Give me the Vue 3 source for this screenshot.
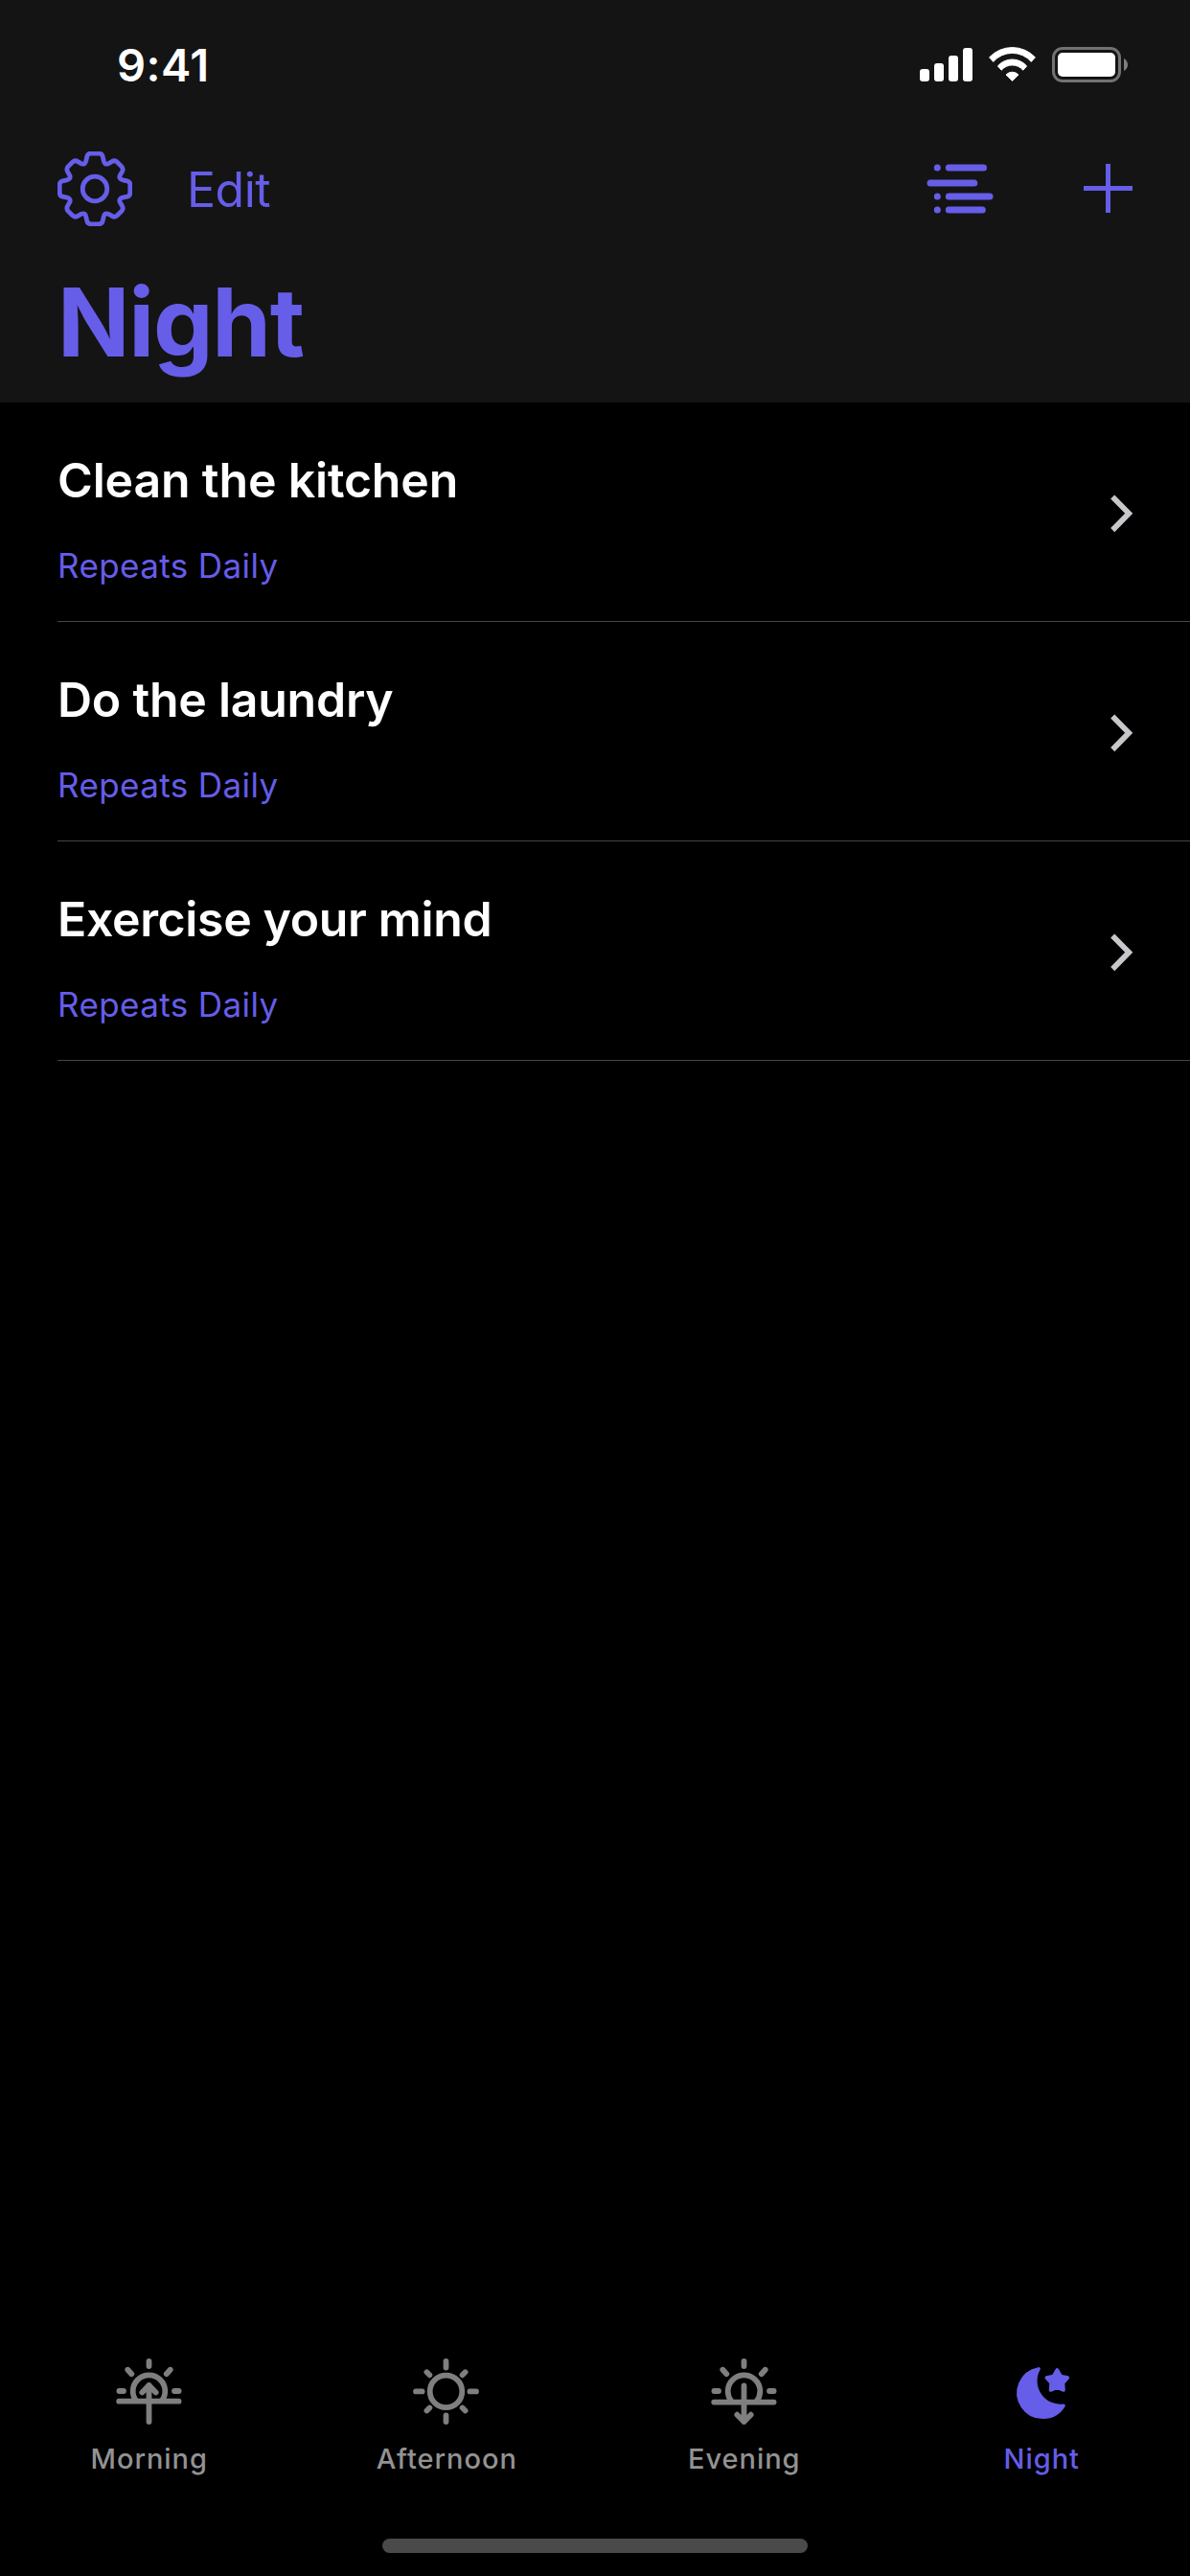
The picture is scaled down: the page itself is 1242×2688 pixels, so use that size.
<script setup>
const bars = [
  { x: 0, h: 13 },
  { x: 15, h: 19 },
  { x: 30, h: 27 },
  { x: 45, h: 35 },
]

const tasks = [
  { id: 'kitchen', title: 'Clean the kitchen', repeat: 'Repeats Daily' },
  { id: 'laundry', title: 'Do the laundry', repeat: 'Repeats Daily' },
  { id: 'mind', title: 'Exercise your mind', repeat: 'Repeats Daily' },
]

const tabs = [
  { id: 'morning', label: 'Morning' },
  { id: 'afternoon', label: 'Afternoon' },
  { id: 'evening', label: 'Evening' },
  { id: 'night', label: 'Night' },
]
const active = 'night'

// One quarter of the cog outline, rotated four times around its centre
const gearQuarter =
  'M39 2.2H43Q46.4 2.2 47.2 5.3L48.2 9.8Q49.2 14.4 53 12.8L56.8 10.6Q59.8 8.8 62.4 11.2L66.8 15.6Q69.2 18.2 67.4 21.2L65.2 25Q63.6 28.8 68.2 29.8L72.7 30.8Q75.8 31.6 75.8 35V39'
</script>

<template>
  <div class="screen">
    <header class="header">
      <div class="status">
        <span class="time">9:41</span>
        <div class="indicators">
          <svg class="signal" width="55" height="37" viewBox="0 0 55 37">
            <rect v-for="b in bars" :key="b.x" :x="b.x" :y="36 - b.h" width="10" :height="b.h" rx="3" fill="#fff" />
          </svg>
          <svg class="wifi" width="49" height="37" viewBox="0 0 49 37">
            <g fill="#fff" stroke="#fff" stroke-width="1" stroke-linejoin="round">
              <path d="M0.6 10.8A33 33 0 0 1 48.4 10.8L44.3 15.4A26.3 26.3 0 0 0 4.7 15.4Z" />
              <path d="M9.4 19.9A20 20 0 0 1 39.6 19.9L35.8 24.2A14.8 14.8 0 0 0 13.2 24.2Z" />
              <path d="M18 29A9 9 0 0 1 31 29L24.5 35.4Z" />
            </g>
          </svg>
          <svg class="battery" width="79" height="37" viewBox="0 0 79 37">
            <rect x="1.5" y="1.5" width="69" height="34" rx="9.5" fill="none" stroke="#727272" stroke-width="3" />
            <rect x="6" y="6" width="60" height="25" rx="5" fill="#fff" />
            <path d="M75 12Q79 14.5 79 18.5T75 25Z" fill="#7f7f7f" />
          </svg>
        </div>
      </div>

      <nav class="toolbar">
        <svg class="gear" width="78" height="78" viewBox="0 0 78 78" fill="none" stroke="currentColor" stroke-width="4.8">
          <path v-for="n in 4" :key="n" :d="gearQuarter" :transform="`rotate(${n * 90} 39 39)`" />
          <circle cx="39" cy="39" r="12.8" />
        </svg>
        <span class="edit">Edit</span>
        <svg class="agenda" width="70" height="54" viewBox="0 0 70 54" stroke="currentColor" stroke-width="7" stroke-linecap="round">
          <path d="M11.3 5h.01M11.3 35h.01M11.3 49h.01M23.3 5H59.5M4 21H49.8M23.3 35H66M23.3 49H58.3" />
        </svg>
        <svg class="plus" width="51" height="52" viewBox="0 0 51 52" stroke="currentColor" stroke-width="5">
          <path d="M25.5 0V51M0 25.5H51" />
        </svg>
      </nav>

      <h1 class="title">Night</h1>
    </header>

    <main class="list">
      <article v-for="t in tasks" :key="t.id" class="row">
        <div class="texts">
          <h2 class="name" :class="t.id">{{ t.title }}</h2>
          <p class="repeat">{{ t.repeat }}</p>
        </div>
        <svg class="chevron" width="24" height="40" viewBox="0 0 24 40" fill="none" stroke="#c7c7cc" stroke-width="5.8">
          <path d="M2.2 2.5L19.2 19.8L2.2 37.1" />
        </svg>
      </article>
    </main>

    <footer class="footer">
      <div class="tabs">
        <div v-for="t in tabs" :key="t.id" class="tab" :class="{ active: t.id === active }">
          <svg width="69" height="69" viewBox="0 0 69 69" fill="none" stroke="currentColor" stroke-width="5.8" stroke-linecap="round" stroke-linejoin="round">
            <template v-if="t.id === 'morning' || t.id === 'evening'">
              <path d="M34.5 3V8M3.4 34H8M61 34H65.6M12.3 11.7L16.3 16.2M56.7 11.7L52.7 16.2" />
              <path d="M21.3 44.5A16.8 16.8 0 1 1 47.7 44.5" stroke-linecap="butt" />
            </template>
            <path v-if="t.id === 'morning'" d="M3.2 44.7H65.6M34.5 28V66M27.3 35.5L34.5 28L41.7 35.5" />
            <path v-if="t.id === 'evening'" d="M3.2 45.6H65.6M34.5 28.5V66M27.3 58.7L34.5 66L41.7 58.7" />
            <template v-if="t.id === 'afternoon'">
              <circle cx="34.5" cy="34.4" r="16.8" />
              <path d="M34.5 3V9.6M34.5 59.4V66M3 34.4H9.6M59.4 34.4H66M14.4 14.3L17.4 17.3M54.6 14.3L51.6 17.3M14.4 54.5L17.4 51.5M54.6 54.5L51.6 51.5" />
            </template>
            <g v-if="t.id === 'night'" fill="currentColor" stroke-width="3.6">
              <path d="M32 10.9A25.4 25.4 0 1 0 58 49.3A26 26 0 0 1 32 10.9Z" />
              <path d="M51.3 12L55.1 18.4L62.3 20L57.5 25.6L58 33L51.3 30.1L44.6 33L45.1 25.6L40.3 20L47.5 18.4Z" />
            </g>
          </svg>
          <span class="label">{{ t.label }}</span>
        </div>
      </div>
      <div class="home"></div>
    </footer>
  </div>
</template>

<style>
body {
  margin: 0;
  background: #000;
}
</style>

<style scoped>
.screen {
  width: 1242px;
  height: 2688px;
  display: flex;
  flex-direction: column;
  overflow: hidden;
  background: #000;
  color: #fff;
  font-family: Inter, "Liberation Sans", sans-serif;
}
svg {
  display: block;
  flex: none;
}
h1, h2, p {
  margin: 0;
}
.header {
  height: 420px;
  flex: none;
  background: #141414;
  color: #665de8;
}
.status {
  height: 132px;
  display: flex;
  justify-content: space-between;
  box-sizing: border-box;
  padding: 38px 65px 0 122px;
  color: #fff;
}
.time {
  font-size: 47px;
  line-height: 60px;
  font-weight: 600;
  letter-spacing: 0.5px;
}
.indicators {
  display: flex;
  padding-top: 11px;
}
.wifi {
  margin-left: 17px;
}
.battery {
  margin-left: 17px;
}
.toolbar {
  height: 130px;
  display: flex;
  align-items: center;
  padding: 0 60px;
}
.edit {
  margin-left: 57px;
  font-size: 50px;
  line-height: 60px;
  letter-spacing: -0.5px;
  padding-top: 2px;
}
.agenda {
  margin-left: auto;
  margin-right: 94px;
}
.title {
  padding-left: 60px;
  margin-top: 14px;
  font-size: 99px;
  line-height: 120px;
  font-weight: 700;
  letter-spacing: -1.2px;
}
.list {
  flex: 1;
  padding-left: 60px;
}
.row {
  height: 229px;
  box-sizing: border-box;
  display: flex;
  justify-content: space-between;
  align-items: center;
  padding-right: 59px;
  border-bottom: 1px solid #464646;
}
.texts {
  align-self: flex-start;
  padding-top: 51px;
}
.name {
  font-size: 50px;
  line-height: 60px;
  font-weight: 600;
  white-space: nowrap;
}
.kitchen {
  letter-spacing: -0.17px;
}
.laundry {
  letter-spacing: -0.25px;
}
.mind {
  letter-spacing: -0.36px;
}
.repeat {
  margin-top: 38px;
  color: #665de8;
  font-size: 35px;
  line-height: 42px;
  letter-spacing: 0.4px;
}
.chevron {
  margin-top: 3px;
}
.footer {
  height: 227px;
  flex: none;
}
.tabs {
  height: 188px;
  display: flex;
}
.tab {
  flex: 1;
  display: flex;
  flex-direction: column;
  align-items: center;
  color: #7f7f7f;
}
.label {
  margin-top: 17px;
  margin-left: 1px;
  color: #929292;
  font-size: 29px;
  line-height: 37px;
  font-weight: 500;
  letter-spacing: 0.95px;
}
.active,
.active .label {
  color: #665de8;
}
.home {
  width: 444px;
  height: 15px;
  margin: 0 auto;
  border-radius: 8px;
  background: #4a4a4a;
}
</style>
